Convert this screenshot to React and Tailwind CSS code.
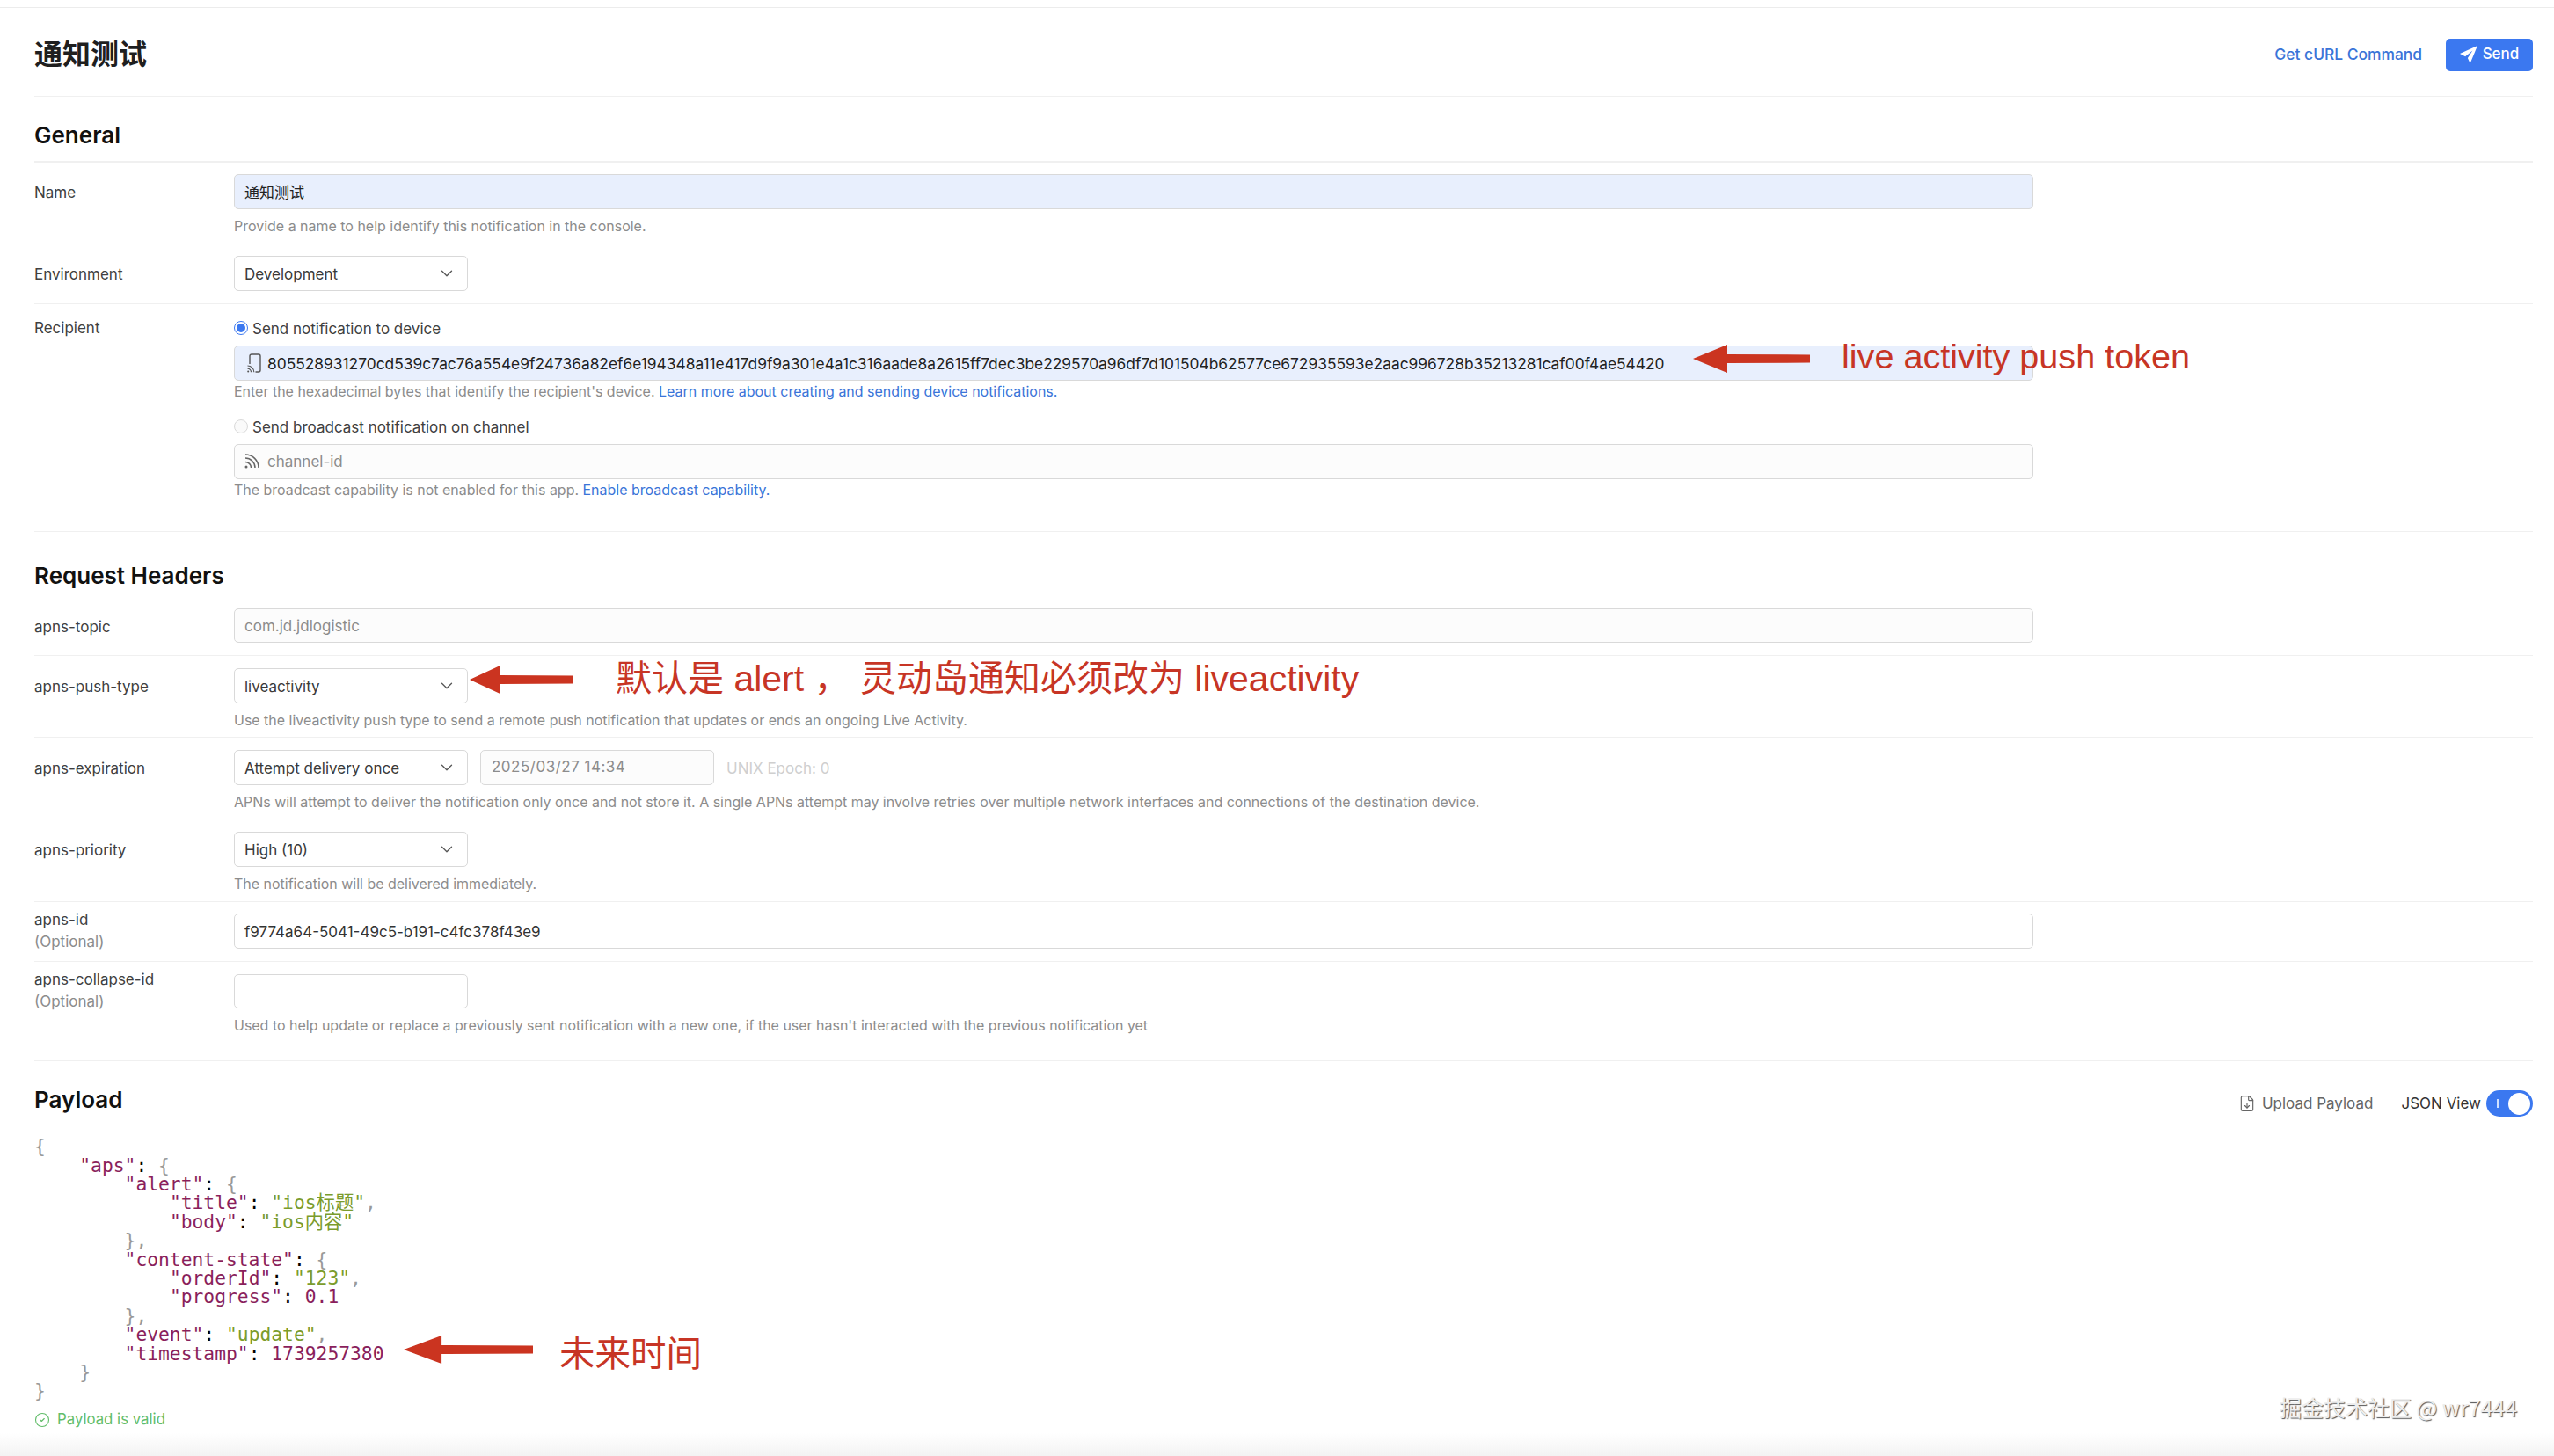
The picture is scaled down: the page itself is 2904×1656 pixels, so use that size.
import { ChevronDown, CircleCheck, FileDown } from "lucide-react";

const token =
  "805528931270cd539c7ac76a554e9f24736a82ef6e194348a11e417d9f9a301e4a1c316aade8a2615ff7dec3be229570a96df7d101504b62577ce672935593e2aac996728b35213281caf00f4ae54420";

const Select = ({ children }) => (
  <div className="flex h-[39.5px] w-[266px] items-center justify-between rounded-[5px] border border-[#d9d9d9] bg-white pl-[11px] pr-[12px] text-[17px] text-[#3a3a3a]">
    <span className="pt-[3px]">{children}</span>
    <ChevronDown size={22} strokeWidth={1.4} className="text-[#555]" />
  </div>
);

const Input = ({ className, children }) => (
  <div
    className={`flex h-[39.5px] items-center rounded-[5px] border border-[#d9d9d9] px-[11px] text-[17px] ${className}`}
  >
    {children}
  </div>
);

const Help = ({ className, children }) => (
  <p className={`h-5 text-[15.98px] leading-5 text-[#8c8c8c] ${className}`}>{children}</p>
);

const Label = ({ sub, children }) => (
  <div className="w-[227px] shrink-0 text-[17px] text-[#404040]">
    {sub ? (
      <div className="mt-[-5.5px] leading-[25px]">
        {children}
        <div className="text-[#8c8c8c]">(Optional)</div>
      </div>
    ) : (
      <div className="pt-[2px] leading-[39.5px]">{children}</div>
    )}
  </div>
);

const Radio = ({ checked, children }) => (
  <div className="flex h-5 items-center text-[17px] text-[#404040]">
    {checked ? (
      <span className="flex h-4 w-4 items-center justify-center rounded-full border border-[#3b78f0] bg-white">
        <span className="h-[10px] w-[10px] rounded-full bg-[#3b78f0]"></span>
      </span>
    ) : (
      <span className="h-4 w-4 rounded-full border border-[#d9d9d9] bg-[#fafafa]"></span>
    )}
    <span className="ml-[5px] pt-[3px]">{children}</span>
  </div>
);

const Arrow = ({ className }) => (
  <svg viewBox="0 0 133 32" preserveAspectRatio="none" className={`absolute ${className}`}>
    <path d="M0 16 L39 0 L39 11 L133 11.5 L133 20.5 L39 21 L39 32 Z" fill="#cb3420" />
  </svg>
);

const k = "text-[#8a1f5c]";
const s = "text-[#7b9c2c]";
const p = "text-[#999]";

const Line = ({ indent = 0, children }) => (
  <div className="h-[21.4px] whitespace-pre leading-[21.4px]">
    {"    ".repeat(indent)}
    {children}
  </div>
);

const Payload = () => (
  <div className="text-[21.3px] [font-family:'DejaVu_Sans_Mono','Noto_Sans_CJK_SC',monospace]">
    <Line><span className={p}>{"{"}</span></Line>
    <Line indent={1}><span className={k}>"aps"</span>: <span className={p}>{"{"}</span></Line>
    <Line indent={2}><span className={k}>"alert"</span>: <span className={p}>{"{"}</span></Line>
    <Line indent={3}><span className={k}>"title"</span>: <span className={s}>"ios标题"</span><span className={p}>,</span></Line>
    <Line indent={3}><span className={k}>"body"</span>: <span className={s}>"ios内容"</span></Line>
    <Line indent={2}><span className={p}>{"},"}</span></Line>
    <Line indent={2}><span className={k}>"content-state"</span>: <span className={p}>{"{"}</span></Line>
    <Line indent={3}><span className={k}>"orderId"</span>: <span className={s}>"123"</span><span className={p}>,</span></Line>
    <Line indent={3}><span className={k}>"progress"</span>: <span className={k}>0.1</span></Line>
    <Line indent={2}><span className={p}>{"},"}</span></Line>
    <Line indent={2}><span className={k}>"event"</span>: <span className={s}>"update"</span><span className={p}>,</span></Line>
    <Line indent={2}><span className={k}>"timestamp"</span>: <span className={k}>1739257380</span></Line>
    <Line indent={1}><span className={p}>{"}"}</span></Line>
    <Line><span className={p}>{"}"}</span></Line>
  </div>
);

export default function App() {
  return (
    <div className="relative h-[1656px] w-[2904px] overflow-hidden bg-white [font-family:Inter,'Noto_Sans_CJK_SC',sans-serif]">
      <div className="h-[9px] border-b border-[#ececec]"></div>

      <div className="pl-[39px] pr-6">
        {/* Page header */}
        <div className="flex h-[101px] items-center justify-between border-b border-[#f0f0f0] pt-[6px]">
          <h1 className="text-[32px] font-semibold text-[#1f1f1f]">通知测试</h1>
          <div className="flex items-center gap-[27px]">
            <span className="text-[17.4px] font-medium text-[#3a74d8]">Get cURL Command</span>
            <button className="flex h-[37px] w-[99px] items-center justify-center gap-[6px] rounded-[5px] bg-[#3b78f0] text-[17px] font-medium text-white">
              <svg viewBox="0 0 18 18" className="h-5 w-5">
                <path d="M18 0 L0 8 L5.5 11 L13 5 L8 12.5 L10.5 18 Z" fill="#fff" />
              </svg>
              Send
            </button>
          </div>
        </div>

        {/* General */}
        <div className="h-[75px] border-b-2 border-[#f0f0f0] pt-[30px]">
          <h2 className="text-[26px] font-semibold leading-[28px] text-[#111]">General</h2>
        </div>

        <div className="flex h-[93px] border-b border-[#f0f0f0] pt-[13px]">
          <Label>Name</Label>
          <div className="w-[2046px]">
            <Input className="bg-[#e8effd] pt-[3px] text-[#222]">通知测试</Input>
            <Help className="mt-[10px]">Provide a name to help identify this notification in the console.</Help>
          </div>
        </div>

        <div className="flex h-[68px] border-b border-[#f0f0f0] pt-[13px]">
          <Label>Environment</Label>
          <Select>Development</Select>
        </div>

        <div className="flex h-[259px] border-b border-[#f0f0f0] pt-[17px]">
          <div className="w-[227px] shrink-0 text-[17px] leading-5 text-[#404040]">Recipient</div>
          <div className="w-[2046px]">
            <Radio checked>Send notification to device</Radio>
            <Input className="mt-[10px] gap-[7px] bg-[#e8effd] text-[#222]">
              <svg viewBox="0 0 16 22" fill="none" stroke="#555" strokeWidth="1.4" className="ml-[3px] h-[22px] w-4 shrink-0">
                <path d="M3 12V3a2 2 0 0 1 2-2h8a2 2 0 0 1 2 2v16a2 2 0 0 1-2 2H9.5" />
                <circle cx="1.2" cy="20.6" r="1" fill="#555" stroke="none" />
                <path d="M0.5 17.2a4 4 0 0 1 4 4M0.5 14a7.3 7.3 0 0 1 7.3 7.3" strokeWidth="1.2" />
              </svg>
              <span className="pt-[3px] text-[17.35px]">{token}</span>
            </Input>
            <Help className="mt-[3.5px]">
              Enter the hexadecimal bytes that identify the recipient's device.{" "}
              <span className="text-[#3a74d8]">Learn more about creating and sending device notifications.</span>
            </Help>
            <div className="mt-[19px]">
              <Radio>Send broadcast notification on channel</Radio>
            </div>
            <Input className="mt-[10px] gap-[9px] bg-[#fcfcfc] text-[#8c8c8c]">
              <svg viewBox="0 0 17 17" fill="none" stroke="#666" strokeWidth="1.5" className="h-[17px] w-[17px] shrink-0">
                <circle cx="2" cy="15" r="1.5" fill="#666" stroke="none" />
                <path d="M1 9.5a6.5 6.5 0 0 1 6.5 6.5M1 5a11 11 0 0 1 11 11M1 1a15 15 0 0 1 15 15" />
              </svg>
              <span className="pt-[2px]">channel-id</span>
            </Input>
            <Help className="mt-[3.5px]">
              The broadcast capability is not enabled for this app.{" "}
              <span className="text-[#3a74d8]">Enable broadcast capability.</span>
            </Help>
          </div>
        </div>

        {/* Request Headers */}
        <div className="h-[86.5px] pt-9">
          <h2 className="text-[26px] font-semibold leading-[28px] text-[#111]">Request Headers</h2>
        </div>

        <div className="flex h-[54.5px] border-b border-[#f0f0f0]">
          <Label>apns-topic</Label>
          <div className="w-[2046px]">
            <Input className="bg-[#fcfcfc] pt-[2px] text-[#8c8c8c]">com.jd.jdlogistic</Input>
          </div>
        </div>

        <div className="flex h-[93px] border-b border-[#f0f0f0] pt-[14px]">
          <Label>apns-push-type</Label>
          <div>
            <Select>liveactivity</Select>
            <Help className="mt-[10px]">
              Use the liveactivity push type to send a remote push notification that updates or ends an ongoing Live Activity.
            </Help>
          </div>
        </div>

        <div className="flex h-[93px] border-b border-[#f0f0f0] pt-[14px]">
          <Label>apns-expiration</Label>
          <div>
            <div className="flex items-center">
              <Select>Attempt delivery once</Select>
              <Input className="ml-[14px] w-[266px] bg-[#fcfcfc] pl-[12px] text-[#8c8c8c] tracking-[0.5px]">2025/03/27 14:34</Input>
              <span className="ml-[14px] pt-[3px] text-[17px] text-[#cfcfcf]">UNIX Epoch: 0</span>
            </div>
            <Help className="mt-[10px]">
              APNs will attempt to deliver the notification only once and not store it. A single APNs attempt may involve retries over multiple network interfaces and connections of the destination device.
            </Help>
          </div>
        </div>

        <div className="flex h-[93.5px] border-b border-[#f0f0f0] pt-[14px]">
          <Label>apns-priority</Label>
          <div>
            <Select>High (10)</Select>
            <Help className="mt-[10px]">The notification will be delivered immediately.</Help>
          </div>
        </div>

        <div className="flex h-[68px] border-b border-[#f0f0f0] pt-[13.5px]">
          <Label sub>apns-id</Label>
          <div className="w-[2046px]">
            <Input className="bg-white pt-[3px] text-[17.4px] text-[#333]">f9774a64-5041-49c5-b191-c4fc378f43e9</Input>
          </div>
        </div>

        <div className="flex h-[113px] border-b border-[#f0f0f0] pt-[14px]">
          <Label sub>apns-collapse-id</Label>
          <div>
            <Input className="w-[266px] bg-white"></Input>
            <Help className="mt-[10px]">
              Used to help update or replace a previously sent notification with a new one, if the user hasn't interacted with the previous notification yet
            </Help>
          </div>
        </div>

        {/* Payload */}
        <div className="flex h-[86.8px] items-start justify-between pt-[30px]">
          <h2 className="text-[26px] font-semibold leading-[28px] text-[#111]">Payload</h2>
          <div className="mt-[3.5px] flex h-[30px] items-center text-[17px]">
            <FileDown size={20} strokeWidth={1.4} className="text-[#666]" />
            <span className="ml-[7px] pt-[2px] text-[#666]">Upload Payload</span>
            <span className="ml-8 pt-[2px] text-[#333]">JSON View</span>
            <button className="ml-[6px] flex h-[30px] w-[53px] items-center justify-between rounded-full bg-[#3b78f0] pl-[12px] pr-[3px]">
              <span className="h-[10px] w-[2px] bg-[#cfe0ff]"></span>
              <span className="h-[25px] w-[25px] rounded-full bg-white"></span>
            </button>
          </div>
        </div>

        <Payload />

        <div className="mt-3 flex h-5 items-center gap-[8px] text-[16.8px] text-[#62bd6a]">
          <CircleCheck size={18} strokeWidth={1.5} />
          <span>Payload is valid</span>
        </div>
      </div>

      {/* Red annotations drawn over the screenshot */}
      <Arrow className="left-[1925px] top-[392px] h-8 w-[133px]" />
      <span className="absolute left-[2094px] top-[381px] text-[39.6px] leading-[48px] text-[#c73525] [font-family:'Liberation_Sans',sans-serif]">
        live activity push token
      </span>
      <Arrow className="left-[534px] top-[757px] h-8 w-[118px]" />
      <span className="absolute left-[700px] top-[748px] text-[41px] leading-[48px] text-[#c73525] [font-family:'Liberation_Sans','Noto_Sans_CJK_SC',sans-serif]">
        默认是 alert ， 灵动岛通知必须改为 liveactivity
      </span>
      <Arrow className="left-[459px] top-[1519px] h-8 w-[147px]" />
      <span className="absolute left-[636px] top-[1513px] text-[40.5px] leading-[48px] text-[#c73525] [font-family:'Noto_Sans_CJK_SC',sans-serif]">
        未来时间
      </span>

      {/* Fade at the bottom of the capture, with the site watermark on it */}
      <div className="absolute bottom-0 left-0 h-[26px] w-full bg-linear-to-b from-white to-[#f3f3f3]"></div>
      <span className="absolute left-[2592px] top-[1582px] text-[25px] leading-9 text-[#eee] [font-family:'Noto_Sans_CJK_SC',sans-serif] [text-shadow:1px_1px_1px_#555]">
        掘金技术社区 @ wr7444
      </span>
    </div>
  );
}
